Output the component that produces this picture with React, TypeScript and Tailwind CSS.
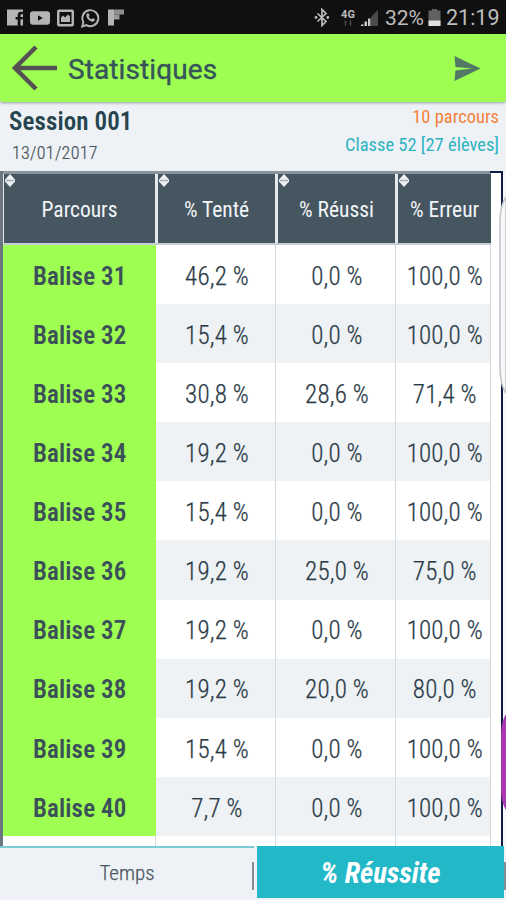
import React, { useState } from 'react';

type Row = { name: string; tried: string; passed: string; failed: string };

const rows: Row[] = [
  { name: 'Balise 31', tried: '46,2 %', passed: '0,0 %', failed: '100,0 %' },
  { name: 'Balise 32', tried: '15,4 %', passed: '0,0 %', failed: '100,0 %' },
  { name: 'Balise 33', tried: '30,8 %', passed: '28,6 %', failed: '71,4 %' },
  { name: 'Balise 34', tried: '19,2 %', passed: '0,0 %', failed: '100,0 %' },
  { name: 'Balise 35', tried: '15,4 %', passed: '0,0 %', failed: '100,0 %' },
  { name: 'Balise 36', tried: '19,2 %', passed: '25,0 %', failed: '75,0 %' },
  { name: 'Balise 37', tried: '19,2 %', passed: '0,0 %', failed: '100,0 %' },
  { name: 'Balise 38', tried: '19,2 %', passed: '20,0 %', failed: '80,0 %' },
  { name: 'Balise 39', tried: '15,4 %', passed: '0,0 %', failed: '100,0 %' },
  { name: 'Balise 40', tried: '7,7 %', passed: '0,0 %', failed: '100,0 %' },
];

const columns = ['Parcours', '% Tenté', '% Réussi', '% Erreur'];

function StatusBar() {
  return (
    <div className="flex h-[34px] shrink-0 items-center justify-between bg-[#101010] pl-1.5 pr-[6px] pt-0.5 font-[Roboto] text-[#bdbdbd] [font-stretch:100%]">
      <svg width="120" height="20" viewBox="0 0 120 20" fill="#b4b4b4">
        {/* facebook */}
        <path d="M1 1.500h16v16h-2.500v-6h2l.4-2.600h-2.400V7.500c0-.9.4-1.300 1.300-1.300h1.100V3.700h-1.900c-2.100 0-3.300 1.200-3.300 3.400v1.800H9.600v2.600h2.100v6H1z" />
        {/* youtube */}
        <path fillRule="evenodd" d="M27 3.300h14q3 0 3 3v7.400q0 3-3 3H27q-3 0-3-3V6.300q0-3 3-3zm5 4v5.400l4.800-2.700z" />
        {/* gallery */}
        <path fillRule="evenodd" d="M53 1.500h13q2 0 2 2v13q0 2-2 2H53q-2 0-2-2v-13q0-2 2-2zm.5 2.500v12h12V4zm1.500 10V9.500l2-2 2 2 3-3 2 2v5.500z" />
        {/* whatsapp */}
        <path d="M76.200 18.500l1.200-4.400a8 8 0 1 1 3 3z" fill="none" stroke="#b4b4b4" strokeWidth="1.900" />
        <path d="M81.300 5.600c.6-.6 1.200-.4 1.500.2l.7 1.500c.1.500-.6 1-.8 1.400.6 1.200 1.600 2.100 2.800 2.600.5-.3.900-1.200 1.400-1l1.600.8c.6.3.4 1.200 0 1.700-1 1.200-2.700 1-4.200.2-1.700-.9-3-2.300-3.700-4-.5-1.300-.3-2.500.7-3.400z" />
        {/* flipboard */}
        <path d="M102 1.500h6v16h-6z" />
        <path d="M108 1.500h10v5h-10z" fill="#8f8f8f" />
        <path d="M108 6.500h5.500v5h-5.500z" fill="#999" />
      </svg>
      <div className="flex items-center">
        <svg width="18" height="20" viewBox="0 0 18 20">
          <path d="M4.500 5.500l8.500 8-4 4V1.500l4 4-8.500 8" fill="none" stroke="#bdbdbd" strokeWidth="1.700" />
          <circle cx="3" cy="9.500" r="1.400" fill="#bdbdbd" />
          <circle cx="14.800" cy="9.500" r="1.400" fill="#bdbdbd" />
        </svg>
        <div className="ml-[9px] mr-0.5 flex w-4 flex-col items-center">
          <span className="text-[11px] font-bold leading-[10px]">4G</span>
          <svg width="10" height="6" viewBox="0 0 10 6" fill="#4d4d4d">
            <path d="M1 2.500L2.500 0 4 2.500H3V6H2V2.500zM6 3.500h1V0h1v3.500h1L7.500 6z" />
          </svg>
        </div>
        <svg className="ml-0.5" width="20" height="20" viewBox="0 0 20 20">
          <path d="M11 9l7-7v16h-7z" fill="#4a4a4a" />
          <path d="M1 16.500h2.500V18H1zM4.500 13.500H7V18H4.500zM8 10.500h2.500V18H8z" fill="#c9c9c9" />
        </svg>
        <span className="ml-[5px] w-[43px] whitespace-nowrap text-[21px] leading-none">32%</span>
        <svg width="14" height="20" viewBox="0 0 14 20">
          <path d="M4 1h5v1.500h3.500V18h-12V2.500H4z" fill="#616161" />
          <path d="M.500 12.500h12V18H.500z" fill="#e0e0e0" />
        </svg>
        <span className="ml-1 w-[54px] text-[21.500px] leading-none">21:19</span>
      </div>
    </div>
  );
}

function AppBar() {
  return (
    <div className="relative z-10 flex h-[68px] shrink-0 items-center rounded-b-[3px] bg-[#9eff52] pl-3 pr-[25px] shadow-[0_1px_3px_rgba(60,70,80,0.5)]">
      <svg width="46" height="46" viewBox="0 0 46 46" fill="none" stroke="#545153" strokeWidth="4.500">
        <path d="M24 2L3 23l21 21M3 23h42" />
      </svg>
      <h1 className="ml-2.5 flex-1 pt-[3px] font-[Roboto] text-[28px] font-normal leading-none tracking-[0.100px] text-[#36545a] [-webkit-text-stroke:0.4px] [font-stretch:100%]">Statistiques</h1>
      <svg width="27" height="27" viewBox="0 0 27 27" fill="#527866">
        <path d="M.500 1L26.500 13.500.500 26 1.500 15.500 18 13.500 1.500 12z" />
      </svg>
    </div>
  );
}

function SortIcon() {
  return (
    <svg className="absolute left-px top-0" width="10" height="13" viewBox="0 0 10 13">
      <path d="M5 0l5 5.500v2L5 13 0 7.500v-2z" fill="#eef1f3" />
      <path d="M1 5.800h8v1.500H1z" fill="#a5acb2" />
    </svg>
  );
}

export default function App() {
  const [tab, setTab] = useState('rate');

  return (
    <div className="flex h-[900px] w-[506px] flex-col overflow-hidden bg-[#eef2f6] font-['Roboto_Condensed','Roboto',sans-serif] [font-stretch:75%]">
      <StatusBar />
      <AppBar />

      <div className="flex h-[69px] shrink-0 justify-between pl-[9px] pr-[7px]">
        <div className="pt-[7px]">
          <p className="text-[25px] font-semibold leading-[26px] tracking-[0.100px] text-[#27454f]">Session 001</p>
          <p className="ml-[3px] mt-2 text-[18px] font-light leading-5 tracking-[0.300px] text-[#46515a] [-webkit-text-stroke:0.2px]">13/01/2017</p>
        </div>
        <div className="pt-[3px] text-right text-[18.500px]">
          <p className="leading-6 text-[#f5813c]">10 parcours</p>
          <p className="mt-1 leading-6 text-[#2db3c1]">Classe 52 [27 élèves]</p>
        </div>
      </div>

      <div className="relative h-[675px] shrink-0 overflow-hidden border-l-[3px] border-[#6b7680] bg-white">
        <div className="flex h-[74px] w-[488px] border-b-2 border-t-[3px] border-b-[#c5ced3] border-t-[#88949b] bg-[#e4e9ed]">
          {columns.map((label, i) => (
            <div
              key={label}
              className={
                'relative flex items-center justify-center bg-[#465661] pt-1 text-[21.500px] text-[#f2f5f7] ' +
                ['ml-px w-[151px]', 'ml-[3px] w-[117px]', 'ml-[3px] w-[117px]', 'ml-[3px] w-[93px]'][i]
              }
            >
              <SortIcon />
              <span>{label}</span>
            </div>
          ))}
        </div>
        {rows.map((row, i) => (
          <div
            key={row.name}
            className={'flex h-[59.100px] w-[488px] text-[25px] font-light tracking-[0.150px] text-[#2b3b48] ' + (i % 2 ? 'bg-[#eef2f5]' : 'bg-white')}
          >
            <div className="flex w-[152.500px] items-center justify-center bg-[#9eff52] pl-px pt-1 font-semibold text-[#3b5058]">{row.name}</div>
            <div className="flex w-[120px] items-center justify-center border-r border-[#d5dbdf] pl-1 pt-1 [-webkit-text-stroke:0.25px]">{row.tried}</div>
            <div className="flex w-[120px] items-center justify-center border-r border-[#d5dbdf] pl-1 pt-1 [-webkit-text-stroke:0.25px]">{row.passed}</div>
            <div className="flex w-[95.500px] items-center justify-center border-r border-[#d5dbdf] pl-1 pt-1 [-webkit-text-stroke:0.25px]">{row.failed}</div>
          </div>
        ))}
        <div className="flex h-4 w-[488px]">
          <div className="w-[153px] border-r border-[#d5dbdf]" />
          <div className="w-[120px] border-r border-[#d5dbdf]" />
          <div className="w-[120px] border-r border-[#d5dbdf]" />
          <div className="w-[95px] border-r border-[#d5dbdf]" />
        </div>

        {/* frame edge and the drawer handles over it */}
        <div className="absolute right-[3px] top-0 h-full w-[13px] border-r-2 border-t-2 border-[#101c48]" />
        <div className="absolute right-0 top-0 h-full w-[3px] bg-[#f6f8fb]" />
        <svg className="absolute right-0 top-6" width="8" height="200" viewBox="0 0 8 200">
          <path d="M8 2Q2 10 2 28V172Q2 190 8 198z" fill="#f7f8fa" stroke="#bfc2c7" strokeWidth="1.500" />
        </svg>
        <svg className="absolute right-0 top-[543px]" width="6" height="96" viewBox="0 0 6 96">
          <path d="M6 0Q1 8 1 20V76Q1 88 6 96z" fill="#a838b0" />
        </svg>
      </div>

      <div className="flex flex-1 items-stretch">
        <button
          onClick={() => setTab('time')}
          className="w-[254px] border-t-2 border-[#7ccbd5] text-center text-[21px] font-light text-[#4a5862] [-webkit-text-stroke:0.25px]"
        >
          Temps
        </button>
        <div className="-ml-0.5 mt-4 h-7 w-[5px] border-l-2 border-[#858d94]" />
        <button
          onClick={() => setTab('rate')}
          className="mb-0.5 w-[247px] bg-[#23b8c8] pt-[5px] text-center text-[28.500px] font-bold italic text-white"
          aria-pressed={tab === 'rate'}
        >
          % Réussite
        </button>
        <div className="mt-4 h-7 w-0.5 bg-[#858d94]" />
      </div>
    </div>
  );
}
